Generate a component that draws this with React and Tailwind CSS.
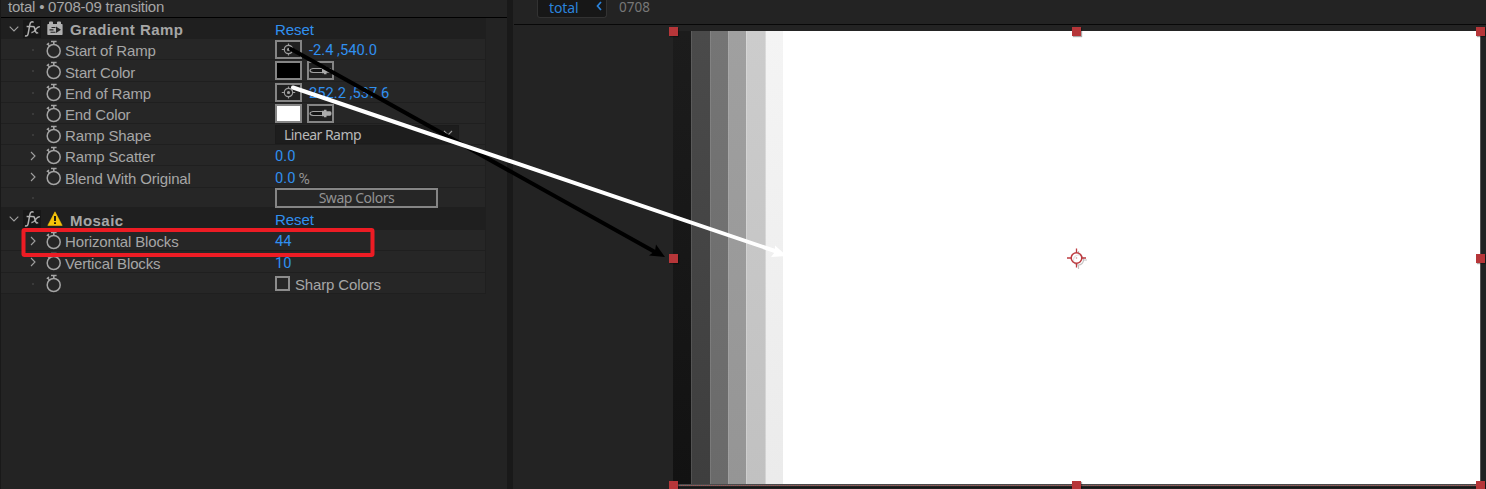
import React from 'react';

const Stopwatch = () => (
  <svg className="ml-[7px] h-[19px] w-[16px] shrink-0" viewBox="0 0 16 19" fill="none" stroke="#a4a4a4">
    <circle cx="7.700" cy="11" r="6.500" strokeWidth="1.500" />
    <path d="M5 1.500h5.600M7.800 1.500v3.300" strokeWidth="1.600" />
    <path d="M.8 4.800l2.200-1.800M2 4.200l1.600 2" strokeWidth="1.400" />
  </svg>
);

const Twirl = ({ kind }) => (
  <span className="ml-[26px] flex w-3 shrink-0 items-center justify-center">
    {kind === 'arrow' ? (
      <svg className="mt-px h-[10px] w-[6px]" viewBox="0 0 6 10" fill="none" stroke="#a0a0a0" strokeWidth="1.1">
        <path d="M1 1l4 4-4 4" />
      </svg>
    ) : (
      <span className="mt-px h-[2px] w-[2px] bg-[#3a3a3a]" />
    )}
  </span>
);

const Row = ({ height, label, kind, watch = true, children }) => (
  <div className={`flex ${height} items-center border-b border-[#1f1f1f] bg-[#262626]`}>
    <Twirl kind={kind} />
    {watch ? <Stopwatch /> : <span className="ml-[7px] w-4" />}
    <span className="ml-[3px] w-[210px] shrink-0 pt-[4px] tracking-[-.14px]">{label}</span>
    {children}
  </div>
);

const EffectHeader = ({ height, title, icon }) => (
  <div className={`flex ${height} items-center bg-[#1f1f1f]`}>
    <svg className="ml-[8px] h-[6px] w-[10px] shrink-0" viewBox="0 0 10 6" fill="none" stroke="#a0a0a0" strokeWidth="1.1">
      <path d="M.7 .7L5 5 9.300 .7" />
    </svg>
    <span className="ml-[4px] flex h-[18px] w-[18px] shrink-0 items-center justify-center bg-[#171717]">
      <svg className="h-[18px] w-[18px]" viewBox="0 0 18 18" fill="none" stroke="#b0b0b0" strokeWidth="1.500">
        <path d="M10.600 2.300C8.600 1.200 7.300 2.200 6.900 4.400L5.200 13.300C4.800 15.600 3.900 16.400 2 15.700M3.600 6.500h5.600M9.200 6.700c1.800-.5 2.100.2 2.600 2l.7 2.500c.5 1.800 1.200 2.200 2.700 1.400M16.800 6.700c-1.900-.2-2.900.9-3.900 2.400s-2.100 3.800-4.500 3.400" />
      </svg>
    </span>
    <span className="ml-[6px] flex w-4 shrink-0">{icon}</span>
    <span className="ml-[7px] w-[205px] shrink-0 pt-[3px] font-bold tracking-[.45px]">{title}</span>
    <span className="pt-[2px] tracking-[-.05px] text-[#3090f0]">Reset</span>
  </div>
);

const BrickIcon = () => (
  <svg className="h-[16px] w-[16px]" viewBox="0 0 16 16">
    <path fill="#b0b0b0" d="M2 3V1.500Q2 .5 3 .5h2Q6 .5 6 1.500V3h4V1.500q0-1 1-1h2q1 0 1 1V3h1q.6 0 .6.7v9.600q0 .7-.7.7H1Q.3 14 .3 13.300V3.700Q.3 3 1 3z" />
    <path stroke="#252525" strokeWidth="1.100" d="M4.500 6.500h4M2.500 8.900h4M3.500 11.300h5" />
    <path fill="#252525" d="M9 5.500l5 3.300-5 3.300z" />
  </svg>
);

const WarningIcon = () => (
  <svg className="h-[16px] w-[16px]" viewBox="0 0 16 16">
    <path fill="#f6c40a" d="M8 .8l7.200 13.600H.8z" stroke="#f6c40a" strokeWidth=".6" strokeLinejoin="round" />
    <path stroke="#241f0c" strokeWidth="2" d="M8 5v5M8 11.200v1.900" />
  </svg>
);

const Box = ({ children }) => (
  <span className="flex h-[19px] w-[27px] shrink-0 items-center justify-center border-2 border-[#858585] bg-[#202020]">
    {children}
  </span>
);

const PointButton = () => (
  <Box>
    <svg className="h-[15px] w-[15px] shrink-0" viewBox="0 0 15 15" fill="none" stroke="#9c9c9c" strokeWidth="1.200">
      <circle cx="7.500" cy="7.500" r="4.200" />
      <circle cx="7.500" cy="7.500" r="1" fill="#b0b0b0" />
      <path d="M7.500 1.500v2.500M7.500 11v2.500M.8 7.500H4M11 7.500h3.200" />
    </svg>
  </Box>
);

const Eyedropper = () => (
  <Box>
    <svg className="h-[9px] w-[23px] shrink-0" viewBox="0 0 23 9">
      <path fill="#141414" stroke="#a0a0a0" strokeWidth="1.200" d="M14 2.500H4Q1 3 1 4.500T4 6.500h10z" />
      <path fill="#aaa" d="M13 1.800h2V.7h2.500V2.200H21q1.500 0 1.500 2.300T21 6.800h-3.500v1.500H15V7.200h-2z" />
    </svg>
  </Box>
);

const values = "pt-[2px] font-[Roboto,sans-serif] text-[14.7px] text-[#3090f0]";

const Point = ({ x, y }) => (
  <span className={`${values} ml-[7px] whitespace-pre`}>
    {x} <span className="text-[#2a80d8]">,</span>{y}
  </span>
);

const EffectControls = () => (
  <section className="w-[507px] shrink-0 border-l border-[#191919] bg-[#232323]">
    <div className="h-[18px] border-b border-black pl-[7px] text-[15px] leading-[14px] tracking-[-.23px]">total • 0708-09 transition</div>
    <div className="w-[485px] border-r border-[#1f1f1f]">
      <EffectHeader height="h-[21px]" title="Gradient Ramp" icon={<BrickIcon />} />
      <Row height="h-[21px]" label="Start of Ramp"><PointButton /><Point x="-2.4" y="540.0" /></Row>
      <Row height="h-[22px]" label="Start Color">
        <Box><span className="h-full w-full bg-black" /></Box><span className="w-[5px]" /><Eyedropper />
      </Row>
      <Row height="h-[21px]" label="End of Ramp"><PointButton /><Point x="252.2" y="537.6" /></Row>
      <Row height="h-[21px]" label="End Color">
        <Box><span className="h-full w-full bg-white" /></Box><span className="w-[5px]" /><Eyedropper />
      </Row>
      <Row height="h-[21px]" label="Ramp Shape">
        <span className="flex h-[19px] w-[184px] items-center justify-between border border-[#1b1b1b] bg-[#1d1d1d] pl-[8px] pr-[5px] font-['Noto_Sans',sans-serif] text-[14px] tracking-[-.55px] text-[#b8b8b8]">
          <span className="pt-px">Linear Ramp</span>
          <svg className="-mt-[2px] h-[6px] w-[10px]" viewBox="0 0 10 6" fill="none" stroke="#999" strokeWidth="1.100"><path d="M1 1l4 4 4-4" /></svg>
        </span>
      </Row>
      <Row height="h-[21px]" label="Ramp Scatter" kind="arrow"><span className={values}>0.0</span></Row>
      <Row height="h-[22px]" label="Blend With Original" kind="arrow">
        <span className={values}>0.0</span><span className="ml-[3px] pt-[4px] font-[Roboto,sans-serif] text-[15.500px] text-[#929292]">%</span>
      </Row>
      <Row height="h-[20px]" label="" watch={false}>
        <span className="flex h-[20px] w-[163px] items-center justify-center border-2 border-[#858585] pt-px font-['Noto_Sans',sans-serif] text-[14px] tracking-[-.45px] text-[#929292]">Swap Colors</span>
      </Row>
      <EffectHeader height="h-[22px]" title="Mosaic" icon={<WarningIcon />} />
      <Row height="h-[21px]" label="Horizontal Blocks" kind="arrow"><span className={values}>44</span></Row>
      <Row height="h-[22px]" label="Vertical Blocks" kind="arrow"><span className={values}>10</span></Row>
      <Row height="h-[21px]" label="">
        <span className="h-[15px] w-[15px] border-2 border-[#8c8c8c]" />
        <span className="ml-[5px] pt-[4px] tracking-[-.14px]">Sharp Colors</span>
      </Row>
    </div>
  </section>
);

const bands = [
  'from-[#1c1c1c] to-[#121212]',
  'border-l border-white/10 from-[#4a4a4a] to-[#3e3e3e]',
  'border-l border-white/10 from-[#757575] to-[#6a6a6a]',
  'border-l border-white/10 from-[#a0a0a0] to-[#959595]',
  'border-l border-white/20 from-[#cccccc] to-[#c1c1c1]',
  'border-l border-black/10 from-[#f4f4f4] to-[#ebebeb]',
];

const handles = [
  'left-[-4px] top-[-4px]',
  'left-[399px] top-[-4px]',
  'left-[803px] top-[-4px]',
  'left-[-4px] top-[223px]',
  'left-[803px] top-[223px]',
  'left-[-4px] top-[450px]',
  'left-[399px] top-[450px]',
  'left-[803px] top-[450px]',
];

const Anchor = () => (
  <svg className="absolute left-[393px] top-[217px] h-[24px] w-[24px]" viewBox="0 0 24 24" fill="none">
    <g stroke="#c4c4c4" strokeWidth="1.200">
      <circle cx="12.500" cy="12" r="5" /><path d="M12.500 17v4M17 12h4M12.500 3v4" />
    </g>
    <circle cx="10.500" cy="10" r="5.300" stroke="#bd3b40" strokeWidth="1.500" fill="#fff" fillOpacity=".5" />
    <path d="M10.500 .5v4.500M10.500 15v4.500M1 10h4.500M15.500 10H20" stroke="#bd3b40" strokeWidth="1.300" />
    <circle cx="10.500" cy="10" r=".8" fill="#d89093" />
  </svg>
);

const Viewer = () => (
  <section className="flex min-w-0 flex-1 flex-col bg-[#232323]">
    <div className="ml-px flex h-[25px] shrink-0 items-start border-b border-[#080808] font-['Noto_Sans',sans-serif]">
      <div className="ml-[23px] flex h-[18px] w-[70px] items-center justify-between rounded-b-[3px] border border-t-0 border-[#323232] bg-[#171717] pl-[11px] pr-[4px] text-[14px] leading-[16px] text-[#2b83dc]">
        <span className="-mt-[2px] tracking-[-.1px]">total</span>
        <svg className="-mt-[5px] h-[10px] w-[6px]" viewBox="0 0 6 10" fill="none" stroke="#2b83dc" strokeWidth="1.700"><path d="M5 1L1.500 5 5 9" /></svg>
      </div>
      <span className="ml-[12px] text-[13.500px] leading-[14px] text-[#777]">0708</span>
    </div>
    <div className="flex min-h-0 flex-1 pl-[160px] pt-[6px]">
      <div className="relative h-[458px] w-[807px] shrink-0">
        <div className="flex h-[453px] bg-white">
          {bands.map((band) => <div key={band} className={`w-[18.330px] bg-linear-to-b ${band}`} />)}
        </div>
        <div className="h-px bg-[#4a4a4a]" />
        <div className="h-px border-t border-dotted border-[#a65050] bg-[#666]" />
        <div className="mt-px h-px bg-[#171717]" />
        {handles.map((place) => <span key={place} className={`absolute h-[9px] w-[9px] bg-[#b63639] shadow-[1px_1px_1px_#0005] ${place}`} />)}
        <Anchor />
      </div>
      <div className="flex-1 border-l border-[#555] bg-[#202323]" />
    </div>
  </section>
);

const Annotations = () => (
  <svg className="pointer-events-none absolute inset-0 h-[489px] w-[1486px]" viewBox="0 0 1486 489">
    <rect x="23.500" y="230" width="349" height="25" rx="1" fill="none" stroke="#ed1c24" strokeWidth="4" />
    <path d="M291 49L655 252" stroke="#000" strokeWidth="4" strokeLinecap="round" />
    <path d="M665 257L656 244.500 655 251 649 255.500z" fill="#000" />
    <path d="M293 87.500L778 252" stroke="#fff" strokeWidth="4" strokeLinecap="round" />
    <path d="M787 256L775 245.500 775 252 771 257z" fill="#fff" />
  </svg>
);

export default function App() {
  return (
    <main className="relative flex h-[489px] w-[1486px] overflow-hidden bg-[#232323] font-['Liberation_Sans',Arial,sans-serif] text-[15px] leading-[18px] text-[#a6a6a6]">
      <EffectControls />
      <div className="w-[6px] shrink-0 bg-[#191919]" />
      <Viewer />
      <Annotations />
    </main>
  );
}
